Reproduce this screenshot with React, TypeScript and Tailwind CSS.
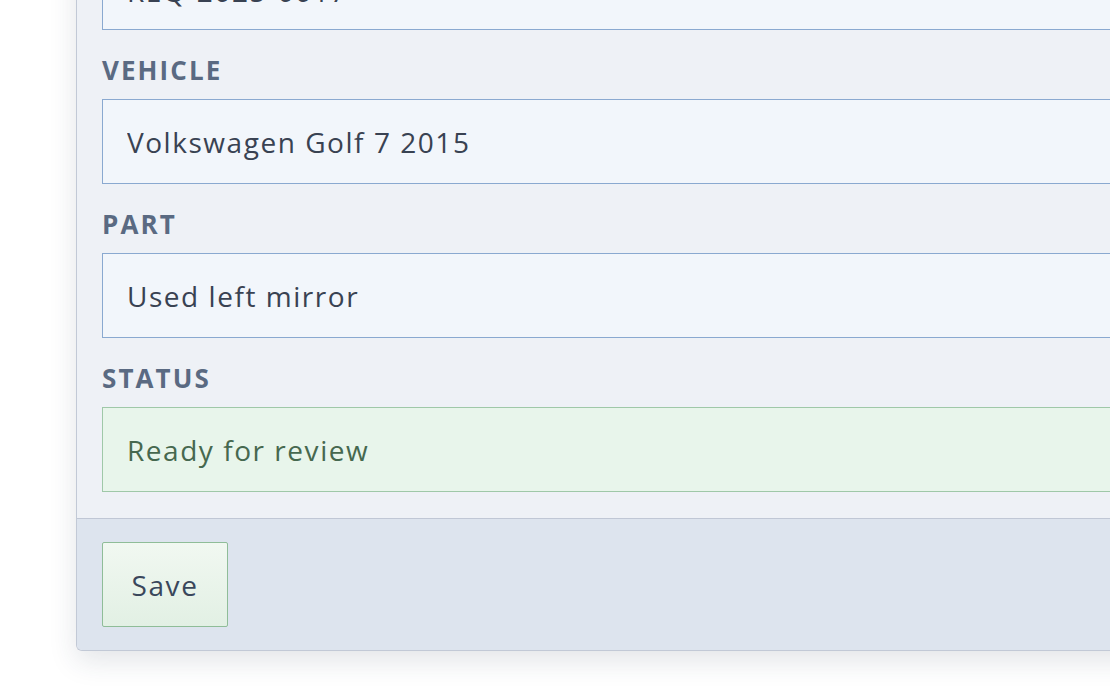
import React from 'react';

interface Field {
  label: string;
  value: string;
  tone?: 'default' | 'success';
}

const fields: Field[] = [
  { label: 'Reference', value: 'REQ-2025-0017' },
  { label: 'Vehicle', value: 'Volkswagen Golf 7 2015' },
  { label: 'Part', value: 'Used left mirror' },
  { label: 'Status', value: 'Ready for review', tone: 'success' },
];

const FormField: React.FC<{ field: Field; first?: boolean }> = ({ field, first }) => {
  const success = field.tone === 'success';
  return (
    <div className="flex flex-col">
      <label className="pt-6 pb-[13px] text-[26px] leading-8 font-bold uppercase tracking-[0.08em] text-[#5a6a82]">
        {field.label}
      </label>
      <input
        readOnly
        defaultValue={field.value}
        className={`h-[85px] w-full border pl-6 text-[28px] tracking-[0.055em] outline-none ${
          first ? 'pt-[6px]' : ''
        } ${
          success
            ? 'border-[#9fc8a8] bg-[#e8f5eb] text-[#46684f]'
            : 'border-[#8aa9d0] bg-[#f2f6fb] text-[#394252]'
        }`}
      />
    </div>
  );
};

const App: React.FC = () => {
  return (
    <div className="h-[695px] w-[1110px] overflow-hidden bg-white" style={{ fontFamily: '"Open Sans", "Noto Sans", sans-serif' }}>
      <div className="-mt-[149px] pl-[76px]">
        <div className="w-[1200px] overflow-hidden rounded-b-[6px] border-b border-l border-[#c2c9d6] bg-[#eef1f6] shadow-[0_10px_28px_rgba(40,55,80,0.13)]">
          {/* Fields */}
          <div className="px-[25px] pt-[25px] pb-[26px]">
            {fields.map((f, i) => (
              <FormField key={f.label} field={f} first={i === 0} />
            ))}
          </div>

          {/* Footer */}
          <div className="border-t border-[#c0c7d5] bg-[#dde4ee] px-[25px] py-[23px]">
            <button className="h-[85px] w-[126px] rounded-[2px] border border-[#8fbd98] bg-linear-to-b from-[#f1f8f1] to-[#e2f0e4] text-[28px] tracking-[0.055em] text-[#3a475b]">
              Save
            </button>
          </div>
        </div>
      </div>
    </div>
  );
};

export default App;
